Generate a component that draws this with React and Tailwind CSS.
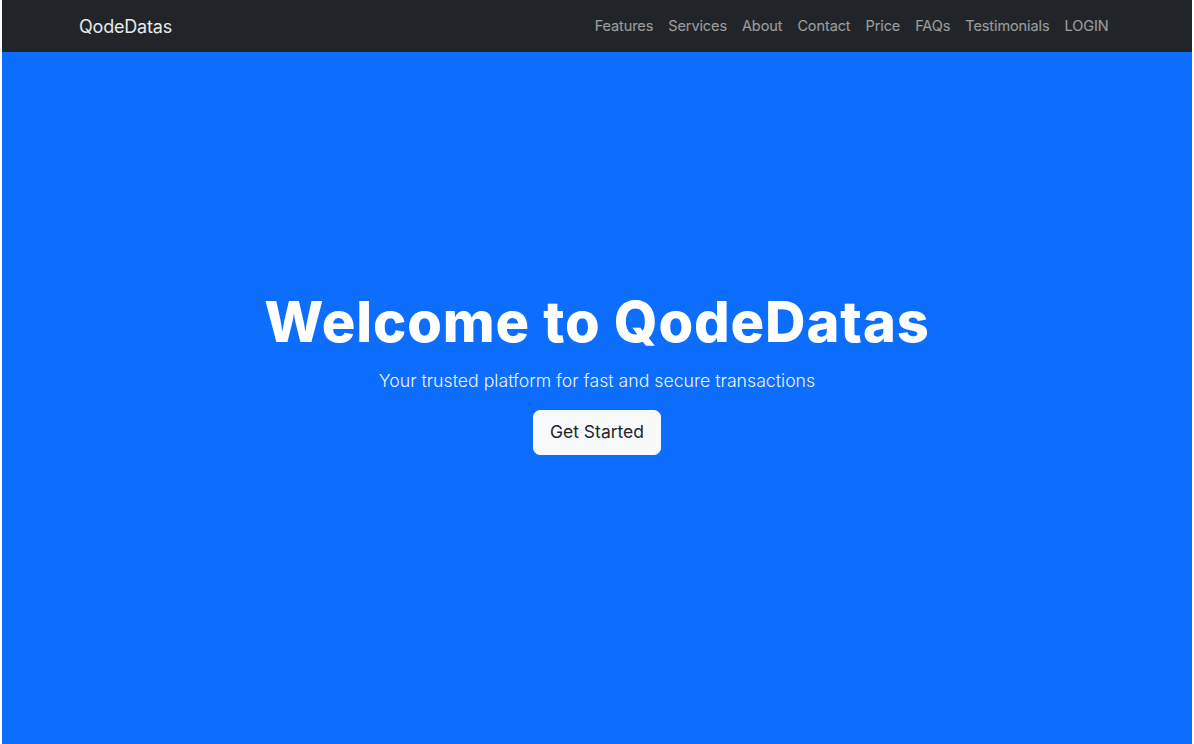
import React from 'react';

const links = ['Features', 'Services', 'About', 'Contact', 'Price', 'FAQs', 'Testimonials', 'LOGIN'];

const App = () => {
    return (
        <div className="bg-white px-[2px] font-['Inter',sans-serif]">
            {/* NAVBAR (fixed over hero) */}
            <nav className="fixed top-0 left-[2px] right-[2px] z-10 h-[52px] bg-[#212529] flex items-center justify-between pl-[77px] pr-[76px]">
                <a className="text-[18px] text-white/90 tracking-[-0.2px]">QodeDatas</a>
                <ul className="flex items-center">
                    {links.map(link => (
                        <li key={link}>
                            <a className="block px-[7.5px] text-[14.5px] text-white/55 tracking-[-0.1px]">{link}</a>
                        </li>
                    ))}
                </ul>
            </nav>

            {/* HERO */}
            <section className="h-screen bg-[#0d6efd] flex flex-col items-center justify-center text-white text-center">
                <h1 className="text-[56px] font-extrabold leading-[1.2] tracking-[0.9px] mb-[12px]">Welcome to QodeDatas</h1>
                <p className="text-[17.7px] font-light text-white/95 mb-[15px]">Your trusted platform for fast and secure transactions</p>
                <button className="bg-[#f8f9fa] text-[#212529] text-[17.5px] px-[16px] h-[45px] rounded-[7px] border border-[#f8f9fa]">
                    Get Started
                </button>
            </section>
        </div>
    );
};

export default App;
